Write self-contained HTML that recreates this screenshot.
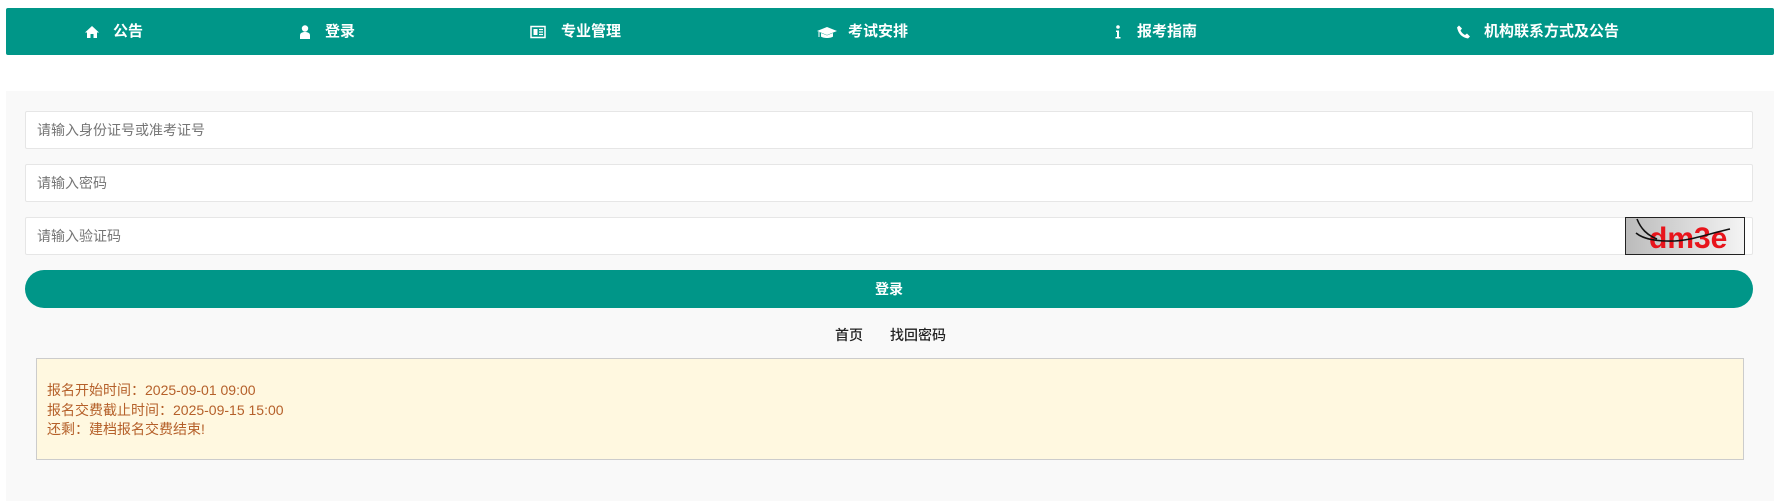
<!DOCTYPE html>
<html><head><meta charset="utf-8"><style>
*{box-sizing:border-box;margin:0;padding:0}
body{width:1788px;height:498px;background:#fff;font-family:"Liberation Sans","Noto Sans CJK SC",sans-serif;position:relative;overflow:hidden}
.nav{position:absolute;left:6px;top:8px;width:1768px;height:47px;background:#009688;border-radius:2px}
.it{position:absolute;top:0;height:47px;line-height:47px;color:#fff;font-weight:bold;font-size:15px;white-space:nowrap}
.ic{position:absolute;top:16px;width:16px;height:16px}
.panel{position:absolute;left:6px;top:91px;width:1768px;height:410px;background:#f9f9f9}
.inp{position:absolute;left:25px;width:1728px;height:38px;background:#fff;border:1px solid #e6e6e6;border-radius:2px;font-size:14px;color:#757575;line-height:36px;padding-left:11px}
.btn{position:absolute;left:25px;top:270px;width:1728px;height:38px;background:#009688;border-radius:19px;color:#fff;font-weight:bold;font-size:14px;text-align:center;line-height:38px}
.lk{position:absolute;top:325px;font-size:14px;color:#222;font-weight:500}
.note{position:absolute;left:36px;top:358px;width:1708px;height:102px;background:#fff8e0;border:1px solid #ccc;color:#b5602a;font-size:14px;line-height:19.5px;padding:22px 0 0 10px}
</style></head><body>
<div class="nav">
<svg class="ic" style="left:78px" viewBox="0 0 16 16"><path d="M8 2L1 8.5h2V14h3.5v-4h3v4H13V8.5h2z" fill="#fff"/></svg>
<div class="it" style="left:107px">公告</div>
<svg class="ic" style="left:291px" viewBox="0 0 16 16"><circle cx="8" cy="4.5" r="3.2" fill="#fff"/><path d="M3 15v-3.5C3 9 5 8 8 8s5 1 5 3.5V15z" fill="#fff"/></svg>
<div class="it" style="left:319px">登录</div>
<svg class="ic" style="left:524px" viewBox="0 0 16 16"><rect x="1" y="2.5" width="14" height="11" fill="none" stroke="#fff" stroke-width="1.5"/><rect x="3.5" y="5" width="4" height="6" fill="#fff"/><path d="M9 5.5h4M9 8h4M9 10.5h4" stroke="#fff" stroke-width="1.2"/></svg>
<div class="it" style="left:555px">专业管理</div>
<svg class="ic" style="left:811px;width:20px" viewBox="0 0 20 16"><path d="M10 3L0 7l10 4 10-4z" fill="#fff"/><path d="M4 9v3.5c2 2 10 2 12 0V9l-6 2.4z" fill="#fff"/><path d="M2 8v5" stroke="#fff"/></svg>
<div class="it" style="left:842px">考试安排</div>
<svg class="ic" style="left:1104px" viewBox="0 0 16 16"><circle cx="8" cy="3" r="1.8" fill="#fff"/><path d="M6 6.5h3v6.5h1.5v1.5h-5V13H7V8H6z" fill="#fff"/></svg>
<div class="it" style="left:1131px">报考指南</div>
<svg class="ic" style="left:1450px" viewBox="0 0 16 16"><path d="M3 1.5l3 3-1.5 2c1 2 2.5 3.5 4.5 4.5l2-1.5 3 3-2 2C6 13.5 2.5 10 1 3.5z" fill="#fff"/></svg>
<div class="it" style="left:1478px">机构联系方式及公告</div>
</div>
<div class="panel"></div>
<div class="inp" style="top:111px">请输入身份证号或准考证号</div>
<div class="inp" style="top:164px">请输入密码</div>
<div class="inp" style="top:217px">请输入验证码</div>
<svg style="position:absolute;left:1625px;top:217px" width="120" height="38" viewBox="0 0 120 38"><defs><linearGradient id="g"><stop offset="0" stop-color="#bbb"/><stop offset="1" stop-color="#f4f4f4"/></linearGradient></defs><rect x="0.5" y="0.5" width="119" height="37" fill="url(#g)" stroke="#222"/><text x="24" y="31" font-family="Liberation Sans" font-weight="bold" font-size="30" fill="#e8141b">dm3e</text><path d="M12 2c4 10 10 16 20 20M11 16c12 10 40 9 54 6s30-8 40-10" fill="none" stroke="#111" stroke-width="1.6"/></svg>
<div class="btn">登录</div>
<div class="lk" style="left:835px">首页</div>
<div class="lk" style="left:890px">找回密码</div>
<div class="note">报名开始时间：2025-09-01 09:00<br>报名交费截止时间：2025-09-15 15:00<br>还剩：建档报名交费结束!</div>
</body></html>
